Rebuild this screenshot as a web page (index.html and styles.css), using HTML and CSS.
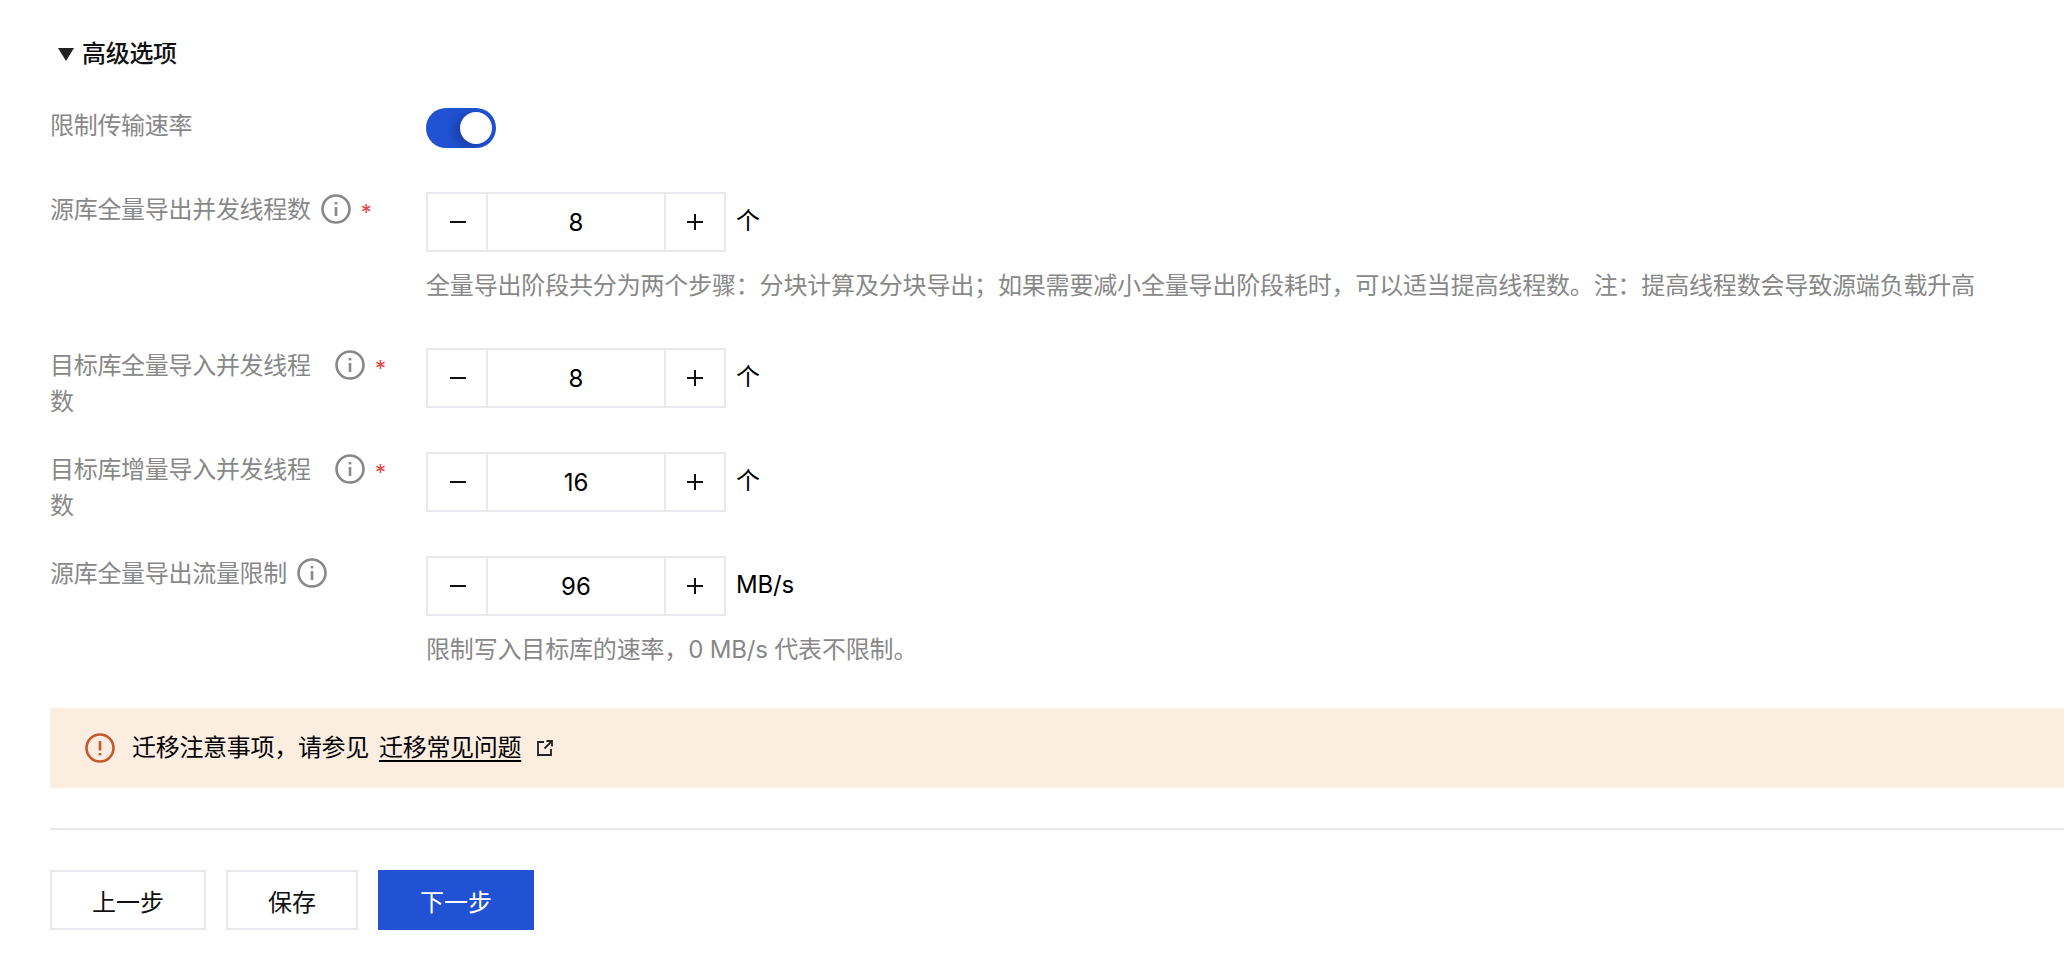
FILE: index.html
```html
<!DOCTYPE html>
<html lang="zh-CN">
<head>
    <meta charset="UTF-8">
    <meta name="viewport" content="width=device-width, initial-scale=1.0">
    <title>高级选项</title>
    <link rel="stylesheet" href="styles.css">
</head>
<body>
    <div class="page">
        <!-- Advanced options -->
        <h2 class="section-title"><span class="caret"></span>高级选项</h2>

        <div class="form-row">
            <div class="form-label"><span class="label-text">限制传输速率</span></div>
            <div class="form-control">
                <div class="switch"><span class="switch-knob"></span></div>
            </div>
        </div>

        <div class="form-row">
            <div class="form-label">
                <span class="label-text">源库全量导出并发线程数</span>
                <svg class="info-icon" viewBox="0 0 30 30"><circle cx="15" cy="15" r="13.5"/><path d="M15 13v9"/><path d="M15 8v2.4"/></svg>
                <span class="required">*</span>
            </div>
            <div class="form-control">
                <div class="stepper-line">
                    <div class="stepper">
                        <button class="step-btn"><svg viewBox="0 0 16 16"><path d="M0 8h16"/></svg></button>
                        <div class="step-value">8</div>
                        <button class="step-btn"><svg viewBox="0 0 16 16"><path d="M0 8h16M8 0v16"/></svg></button>
                    </div>
                    <span class="unit">个</span>
                </div>
                <p class="help">全量导出阶段共分为两个步骤：分块计算及分块导出；如果需要减小全量导出阶段耗时，可以适当提高线程数。注：提高线程数会导致源端负载升高</p>
            </div>
        </div>

        <div class="form-row">
            <div class="form-label">
                <span class="label-text">目标库全量导入并发线程数</span>
                <svg class="info-icon" viewBox="0 0 30 30"><circle cx="15" cy="15" r="13.5"/><path d="M15 13v9"/><path d="M15 8v2.4"/></svg>
                <span class="required">*</span>
            </div>
            <div class="form-control">
                <div class="stepper-line">
                    <div class="stepper">
                        <button class="step-btn"><svg viewBox="0 0 16 16"><path d="M0 8h16"/></svg></button>
                        <div class="step-value">8</div>
                        <button class="step-btn"><svg viewBox="0 0 16 16"><path d="M0 8h16M8 0v16"/></svg></button>
                    </div>
                    <span class="unit">个</span>
                </div>
            </div>
        </div>

        <div class="form-row">
            <div class="form-label">
                <span class="label-text">目标库增量导入并发线程数</span>
                <svg class="info-icon" viewBox="0 0 30 30"><circle cx="15" cy="15" r="13.5"/><path d="M15 13v9"/><path d="M15 8v2.4"/></svg>
                <span class="required">*</span>
            </div>
            <div class="form-control">
                <div class="stepper-line">
                    <div class="stepper">
                        <button class="step-btn"><svg viewBox="0 0 16 16"><path d="M0 8h16"/></svg></button>
                        <div class="step-value">16</div>
                        <button class="step-btn"><svg viewBox="0 0 16 16"><path d="M0 8h16M8 0v16"/></svg></button>
                    </div>
                    <span class="unit">个</span>
                </div>
            </div>
        </div>

        <div class="form-row">
            <div class="form-label">
                <span class="label-text">源库全量导出流量限制</span>
                <svg class="info-icon" viewBox="0 0 30 30"><circle cx="15" cy="15" r="13.5"/><path d="M15 13v9"/><path d="M15 8v2.4"/></svg>
            </div>
            <div class="form-control">
                <div class="stepper-line">
                    <div class="stepper">
                        <button class="step-btn"><svg viewBox="0 0 16 16"><path d="M0 8h16"/></svg></button>
                        <div class="step-value">96</div>
                        <button class="step-btn"><svg viewBox="0 0 16 16"><path d="M0 8h16M8 0v16"/></svg></button>
                    </div>
                    <span class="unit">MB/s</span>
                </div>
                <p class="help">限制写入目标库的速率，0 MB/s 代表不限制。</p>
            </div>
        </div>

        <!-- Notice -->
        <div class="notice">
            <svg class="notice-icon" viewBox="0 0 30 30"><circle cx="15" cy="15" r="13.5"/><path d="M15 8v9.5"/><path d="M15 20v2.4"/></svg>
            <span class="notice-text">迁移注意事项，请参见</span>
            <a href="#" class="notice-link">迁移常见问题</a>
            <svg class="external-icon" viewBox="0 0 16 16"><path d="M7 2H1v13h13V9"/><path d="M9.5 1H15v5.5"/><path d="M15 1L7.5 8.5"/></svg>
        </div>

        <hr class="divider">

        <!-- Footer buttons -->
        <div class="actions">
            <button class="btn">上一步</button>
            <button class="btn">保存</button>
            <button class="btn btn-primary">下一步</button>
        </div>
    </div>
</body>
</html>
```

FILE: styles.css
```css
/* General Styles */
body {
    margin: 0;
    font-family: Inter, "Noto Sans CJK SC", sans-serif;
    font-size: 24px;
    line-height: 36px;
    color: #000;
    background: #fff;
}

.page {
    padding: 36px 0 34px 50px;
}

/* Section title */
.section-title {
    display: flex;
    align-items: center;
    margin: 0 0 36px;
    padding-left: 8px;
    font-size: 24px;
    line-height: 36px;
    font-weight: 500;
    color: #111;
    letter-spacing: -0.3px;
}

.caret {
    width: 0;
    height: 0;
    margin-right: 8px;
    border-left: 8px solid transparent;
    border-right: 8px solid transparent;
    border-top: 13px solid #222;
}

/* Form rows */
.form-row {
    display: flex;
    margin-bottom: 32px;
}

.form-label {
    display: flex;
    align-items: flex-start;
    flex: 0 0 376px;
    color: #888;
}

.label-text {
    max-width: 275px;
    letter-spacing: -0.3px;
}

.info-icon {
    flex: none;
    width: 30px;
    height: 30px;
    margin-left: 10px;
    margin-top: 2px;
    fill: none;
    stroke: #888;
    stroke-width: 2.6;
}

.required {
    margin-left: 10px;
    color: #e54545;
    font-size: 22px;
    line-height: 40px;
}

/* Leaves room under the control so a two line label does not push the row */
.form-control {
    padding-bottom: 12px;
}

/* Switch */
.switch {
    position: relative;
    width: 70px;
    height: 40px;
    border-radius: 20px;
    background: #2052d3;
    overflow: hidden;
}

.switch-knob {
    position: absolute;
    top: 4px;
    right: 4px;
    width: 32px;
    height: 32px;
    border-radius: 50%;
    background: #fff;
    box-shadow: -6px 3px 10px rgba(20, 40, 110, 0.45);
}

/* Stepper */
.stepper-line {
    display: flex;
    align-items: center;
    height: 60px;
}

.stepper {
    display: flex;
    width: 300px;
    height: 60px;
    box-sizing: border-box;
    border: 2px solid #e7e8ee;
}

.step-btn {
    flex: none;
    width: 58px;
    padding: 0;
    border: 0;
    background: #fff;
}

.step-btn svg {
    display: block;
    width: 16px;
    height: 16px;
    margin: 0 auto;
    fill: none;
    stroke: #111;
    stroke-width: 2;
}

.step-btn:first-child svg {
    margin-left: 22px;
}

.step-value {
    flex: 1;
    border-left: 2px solid #e7e8ee;
    border-right: 2px solid #e7e8ee;
    line-height: 58px;
    text-align: center;
}

.unit {
    margin-left: 10px;
    margin-bottom: 2px;
    letter-spacing: -0.2px;
}

.help {
    margin: 16px 0 0;
    color: #888;
    letter-spacing: -0.17px;
}

/* Notice */
.notice {
    display: flex;
    align-items: center;
    height: 80px;
    margin-top: -4px;
    padding-left: 35px;
    background: #fcede1;
    letter-spacing: -0.3px;
}

.notice-icon {
    flex: none;
    width: 30px;
    height: 30px;
    margin-right: 17px;
    fill: none;
    stroke: #c4582c;
    stroke-width: 2.6;
}

.notice-link {
    margin-left: 10px;
    color: #000;
    text-decoration: underline;
    text-decoration-thickness: 2px;
    text-underline-offset: 4px;
}

.external-icon {
    flex: none;
    width: 16px;
    height: 16px;
    margin-left: 16px;
    fill: none;
    stroke: #222;
    stroke-width: 1.8;
}

.divider {
    height: 2px;
    margin: 40px 0;
    border: 0;
    background: #e7e8ee;
}

/* Footer buttons */
.actions {
    display: flex;
    gap: 20px;
}

.btn {
    height: 60px;
    padding: 0 40px;
    box-sizing: border-box;
    border: 2px solid #e7e8ee;
    background: #fff;
    color: #111;
    font-family: inherit;
    font-size: 24px;
}

.btn-primary {
    border-color: #2052d3;
    background: #2052d3;
    color: #fff;
}
```
